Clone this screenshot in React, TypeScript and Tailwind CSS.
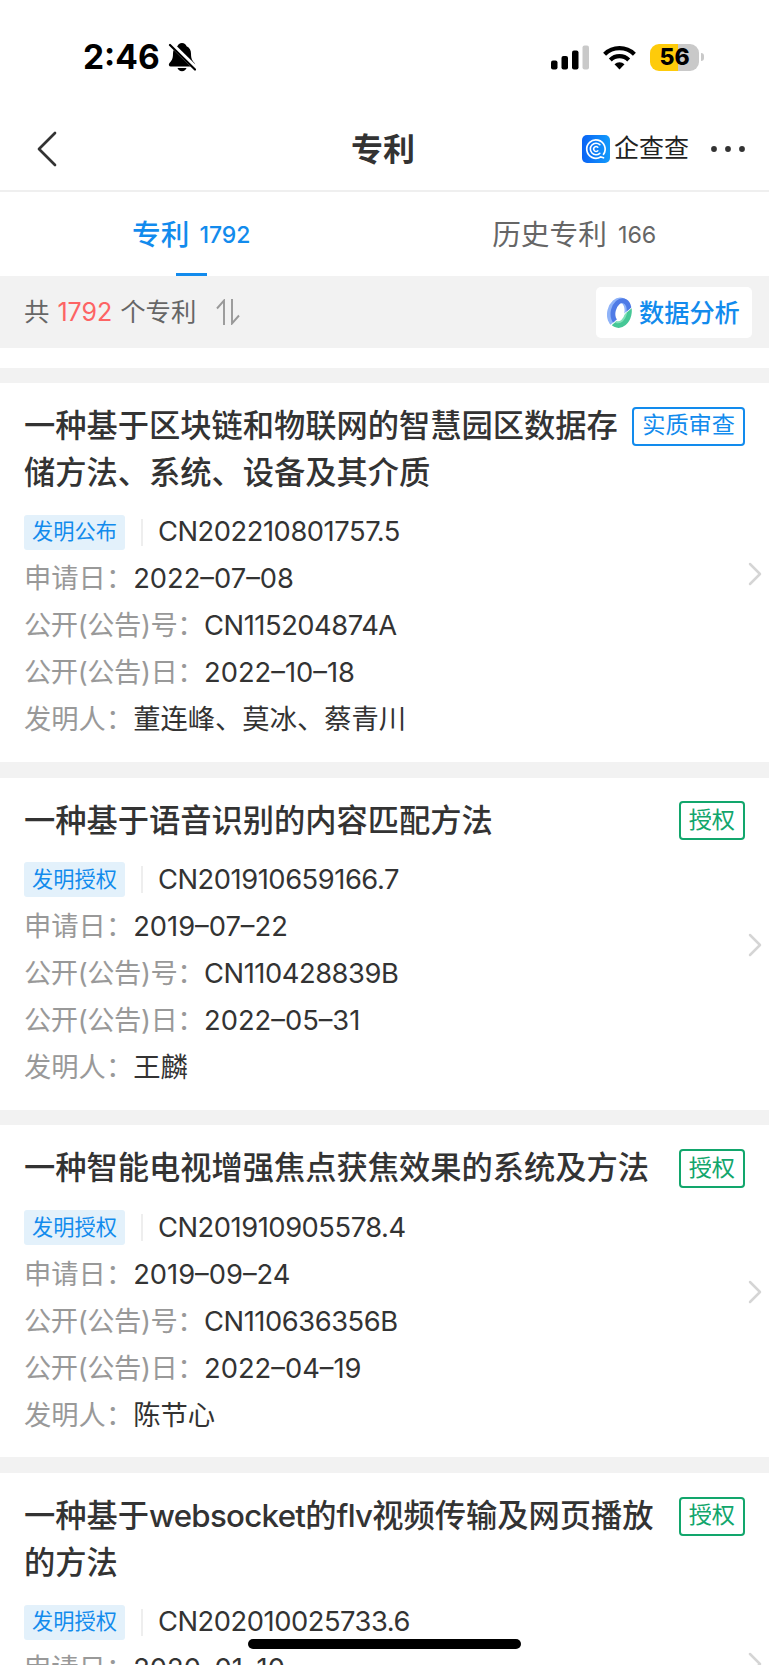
type Patent = {
  title: string;
  status: string;
  statusType: "review" | "granted";
  kind: string;
  number: string;
  applied: string;
  publicationNo: string;
  publicationDate: string;
  inventors: string;
};

const patents: Patent[] = [
  {
    title: "一种基于区块链和物联网的智慧园区数据存储方法、系统、设备及其介质",
    status: "实质审查",
    statusType: "review",
    kind: "发明公布",
    number: "CN202210801757.5",
    applied: "2022–07–08",
    publicationNo: "CN115204874A",
    publicationDate: "2022–10–18",
    inventors: "董连峰、莫冰、蔡青川",
  },
  {
    title: "一种基于语音识别的内容匹配方法",
    status: "授权",
    statusType: "granted",
    kind: "发明授权",
    number: "CN201910659166.7",
    applied: "2019–07–22",
    publicationNo: "CN110428839B",
    publicationDate: "2022–05–31",
    inventors: "王麟",
  },
  {
    title: "一种智能电视增强焦点获焦效果的系统及方法",
    status: "授权",
    statusType: "granted",
    kind: "发明授权",
    number: "CN201910905578.4",
    applied: "2019–09–24",
    publicationNo: "CN110636356B",
    publicationDate: "2022–04–19",
    inventors: "陈节心",
  },
  {
    title: "一种基于websocket的flv视频传输及网页播放的方法",
    status: "授权",
    statusType: "granted",
    kind: "发明授权",
    number: "CN202010025733.6",
    applied: "2020–01–10",
    publicationNo: "",
    publicationDate: "",
    inventors: "",
  },
];

const statusStyles = {
  review: "border-[#128bed] text-[#128bed]",
  granted: "border-[#12a66c] text-[#12a66c]",
};

function StatusBar() {
  return (
    <div className="flex h-[107px] shrink-0 items-center pt-[7px] pr-[65px] pl-[83px] text-black">
      <span className="pt-px text-[33.500px] leading-none font-bold">2:46</span>
      <svg viewBox="0 0 28 30" className="ml-[8px] h-[30px] w-[28px]" aria-hidden>
        <path
          d="M14 1c-2.300 0-4 1.300-4.600 3.200C6.300 5.600 5 8.300 5 11.500c0 6-1.600 7.300-3.500 9.500-1.300 1.600-.6 3.500 1.300 3.500h22.400c1.900 0 2.600-1.900 1.300-3.500-1.900-2.200-3.500-3.500-3.500-9.500 0-3.200-1.300-5.900-4.400-7.300C18 2.300 16.300 1 14 1z"
          fill="currentColor"
        />
        <path d="M9.500 26h9c-.6 2-2.300 3.200-4.500 3.200S10.100 28 9.500 26z" fill="currentColor" />
        <path d="M2.500 1.500L28 26.500" stroke="#fff" strokeWidth="5" />
        <path d="M2 3L27 27.500" stroke="currentColor" strokeWidth="2.200" strokeLinecap="round" />
      </svg>
      <svg viewBox="0 0 38 25" className="ml-auto h-[25px] w-[38px]" aria-hidden>
        <rect x="0" y="15.500" width="6.500" height="9" rx="2" fill="currentColor" />
        <rect x="10.500" y="11" width="6.500" height="13.500" rx="2" fill="currentColor" />
        <rect x="21" y="5.500" width="6.500" height="19" rx="2" fill="currentColor" />
        <rect x="31.500" y="0.500" width="6.500" height="24" rx="2" fill="#c9c9c9" />
      </svg>
      <svg viewBox="0 0 33 25" className="ml-[14px] h-[25px] w-[33px]" aria-hidden>
        <g fill="none" stroke="currentColor" strokeWidth="4.200">
          <path d="M1.600 9.300a21.300 21.300 0 0129.800 0" />
          <path d="M7.300 14.900a13.200 13.200 0 0118.400 0" />
        </g>
        <path d="M16.500 24.500l-5-5.200a7.200 7.200 0 0110 0z" fill="currentColor" />
      </svg>
      <div className="ml-[14px] flex h-[27px] w-[49px] items-center justify-center rounded-[9px] bg-[linear-gradient(90deg,#fecb0a_57%,#c9c9c9_57%)] pt-px text-[23px] leading-none font-extrabold">
        56
      </div>
      <div className="ml-[1.500px] h-[8px] w-[3.500px] rounded-r-full bg-[#c9c9c9]" />
    </div>
  );
}

function NavBar() {
  return (
    <div className="grid h-[85px] shrink-0 grid-cols-3 items-center border-b-2 border-[#efefef] pr-[24px] pl-[36px] text-[#333]">
      <svg viewBox="0 0 22 36" className="h-[36px] w-[22px]" fill="none" aria-hidden>
        <path d="M19 2L3 18l16 16" stroke="currentColor" strokeWidth="2.700" strokeLinecap="round" strokeLinejoin="round" />
      </svg>
      <h1 className="-ml-[15px] pt-[3px] text-center text-[32px] leading-none font-bold">专利</h1>
      <div className="flex items-center justify-end">
        <svg viewBox="0 0 28 28" className="h-[28px] w-[28px]" aria-hidden>
          <defs>
            <linearGradient id="brand" x1="0" y1="0" x2="1" y2="0">
              <stop offset="0" stopColor="#0a63f5" />
              <stop offset="1" stopColor="#129bfb" />
            </linearGradient>
          </defs>
          <rect width="28" height="28" rx="5" fill="url(#brand)" />
          <g fill="none" stroke="#fff" strokeLinecap="round">
            <path d="M21.500 19.300A9.200 9.200 0 1 0 18.600 22L21.500 22.800" strokeWidth="1.700" />
            <path d="M17.800 9.700A5.700 5.700 0 1 0 17.800 18.300" strokeWidth="1.600" />
            <path d="M15.800 12.300A2.400 2.400 0 1 0 15.800 15.700" strokeWidth="1.500" />
          </g>
        </svg>
        <span className="ml-[4px] text-[25px] leading-none text-[#222]">企查查</span>
        <svg viewBox="0 0 34 6" className="ml-[22px] h-[6px] w-[34px]" fill="currentColor" aria-hidden>
          <circle cx="3" cy="3" r="2.900" />
          <circle cx="17" cy="3" r="2.900" />
          <circle cx="31" cy="3" r="2.900" />
        </svg>
      </div>
    </div>
  );
}

function Tabs() {
  return (
    <div className="grid h-[84px] shrink-0 grid-cols-2 text-[28.700px]">
      <div className="relative flex items-center justify-center pt-[2px] pr-[2px] font-medium text-[#128bed]">
        专利<span className="ml-[10px] text-[23px]">1792</span>
        <span className="absolute bottom-0 left-[176px] h-[3px] w-[31px] bg-[#128bed]" />
      </div>
      <div className="flex items-center justify-center pt-[2px] pr-[5px] text-[#666]">
        历史专利<span className="ml-[11px] text-[23.300px]">166</span>
      </div>
    </div>
  );
}

function AnalysisIcon() {
  return (
    <svg viewBox="0 0 25 31" className="mr-[7px] h-[31px] w-[25px]" aria-hidden>
      <defs>
        <clipPath id="upper">
          <path d="M-2-2h30v9.500L2.500 28.500H-2z" />
        </clipPath>
        <clipPath id="lower">
          <path d="M28 8.500V34H2v-3.500z" />
        </clipPath>
      </defs>
      <g fill="none" clipPath="url(#upper)">
        <ellipse cx="11.500" cy="15.500" rx="8.500" ry="12.500" transform="rotate(14 11.500 15.500)" stroke="#8fb3f8" strokeWidth="5.500" />
        <ellipse cx="14" cy="15" rx="7.800" ry="11.500" transform="rotate(14 14 15)" stroke="#4f7be6" strokeWidth="4.800" />
      </g>
      <g fill="none" clipPath="url(#lower)">
        <ellipse cx="13" cy="16" rx="8.800" ry="12.300" transform="rotate(14 13 16)" stroke="#46c796" strokeWidth="5.500" />
        <ellipse cx="12.500" cy="15.500" rx="6.500" ry="10" transform="rotate(14 12.500 15.500)" stroke="#7fe0b7" strokeWidth="2" />
      </g>
    </svg>
  );
}

function SummaryBar() {
  return (
    <div className="flex h-[72px] shrink-0 items-center bg-[#f2f2f2] pr-[17px] pl-[24px] text-[25.400px] text-[#666]">
      <span>共</span>
      <span className="mx-[8px] pt-px text-[25px] text-[#fd6464]">1792</span>
      <span>个专利</span>
      <svg viewBox="0 0 24 26" className="ml-[20px] h-[26px] w-[24px]" fill="none" stroke="#999" strokeWidth="1.900" aria-hidden>
        <path d="M1 9.500L8 1.500V26" />
        <path d="M16 0v24.500l7-8" />
      </svg>
      <button className="ml-auto flex h-[51px] w-[156px] items-center rounded-[5px] bg-white pl-[11px] text-[25.200px] font-medium text-[#128bed]">
        <AnalysisIcon />
        <span className="pt-[4px]">数据分析</span>
      </button>
    </div>
  );
}

// Latin words inside a title are set a little tighter than the Chinese text
function Title({ text }: { text: string }) {
  return (
    <h2 className="w-[640px] pt-[2px] text-[31.250px] leading-[47px] font-medium">
      {text.split(/([a-z]+)/).map((part, i) =>
        i % 2 ? (
          <span key={i} className="tracking-[-0.7px]">
            {part}
          </span>
        ) : (
          part
        ),
      )}
    </h2>
  );
}

function Row({ label, value, code }: { label: string; value: string; code?: boolean }) {
  return (
    <div className="flex h-[47px] items-center">
      <span className={label.includes("(") ? "tracking-[-0.45px] text-[#999]" : "text-[#999]"}>{label}</span>
      <span className={code ? "tracking-[-0.45px]" : undefined}>{value}</span>
    </div>
  );
}

function PatentCard({ patent }: { patent: Patent }) {
  return (
    <article className="relative shrink-0 bg-white px-[24px] pt-[18px] pb-[18.500px] text-[#333]">
      <div className="flex items-start justify-between">
        <Title text={patent.title} />
        <span
          className={`mt-[5.500px] flex h-[39px] shrink-0 items-center rounded-[4px] border-2 px-[8px] text-[23.200px] leading-none ${statusStyles[patent.statusType]}`}
        >
          {patent.status}
        </span>
      </div>
      <div className="mt-[11.500px] text-[27.300px] leading-none">
        <div className="flex h-[47px] items-center">
          <span className="flex h-[35px] w-[101px] items-center justify-center rounded-[3px] bg-[#e3f1fb] text-[21.200px] text-[#128bed]">
            {patent.kind}
          </span>
          <span className="mr-[15px] ml-[16px] h-[27px] w-[2px] bg-[#eee]" />
          <span className="tracking-[-0.45px]">{patent.number}</span>
        </div>
        <Row label="申请日：" value={patent.applied} />
        <Row label="公开(公告)号：" value={patent.publicationNo} code />
        <Row label="公开(公告)日：" value={patent.publicationDate} />
        <Row label="发明人：" value={patent.inventors} />
      </div>
      <svg viewBox="0 0 14 24" className="absolute top-1/2 right-[7px] mt-[-11px] h-[24px] w-[14px]" fill="none" aria-hidden>
        <path d="M2 2l10 10L2 22" stroke="#d5d5d5" strokeWidth="2.500" strokeLinecap="round" strokeLinejoin="round" />
      </svg>
    </article>
  );
}

export default function App() {
  return (
    <div className="relative flex h-[1665px] w-[769px] flex-col overflow-hidden bg-white font-['Inter','Noto_Sans_CJK_SC',sans-serif]">
      <StatusBar />
      <NavBar />
      <Tabs />
      <SummaryBar />
      <div className="mt-[19.500px] flex shrink-0 flex-col gap-[15.700px] bg-[#f2f2f2] pt-[15.500px]">
        {patents.map((patent) => (
          <PatentCard key={patent.number} patent={patent} />
        ))}
      </div>
      <div className="absolute bottom-[16px] left-[248px] h-[10px] w-[273px] rounded-full bg-black" />
    </div>
  );
}
